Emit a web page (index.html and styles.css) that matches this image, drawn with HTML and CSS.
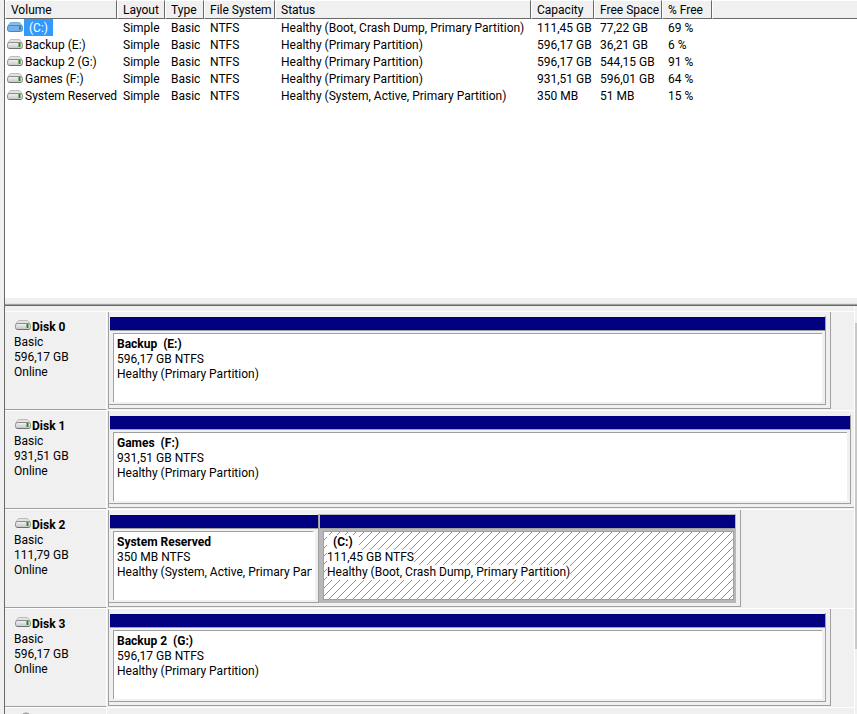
FILE: index.html
```html
<!DOCTYPE html>
<html lang="en">

<head>
    <meta charset="UTF-8">
    <meta name="viewport" content="width=device-width, initial-scale=1.0">
    <title>Disk Management</title>
    <link rel="stylesheet" href="styles.css">
</head>

<body>
    <!-- shared drive icon -->
    <svg class="defs" width="0" height="0" aria-hidden="true">
        <defs>
            <linearGradient id="metal" x1="0" y1="0" x2="0" y2="1">
                <stop offset="0" stop-color="#f4f4f4" />
                <stop offset="1" stop-color="#c4c4c8" />
            </linearGradient>
        </defs>
        <symbol id="drive" viewBox="0 0 16 11">
            <path d="M3.5 0.5h9L15 3.5H1z" fill="#e2e2e2" stroke="#bcbcbc" />
            <rect x="0.5" y="3.5" width="15" height="6" rx="2" fill="url(#metal)" stroke="#8c8c90" />
            <path d="M2 9.5h12" stroke="#707074" />
            <rect x="11" y="4" width="3" height="4" fill="#7fb878" />
            <rect x="12" y="4" width="1" height="4" fill="#2f7f2c" />
        </symbol>
        <symbol id="drive-selected" viewBox="0 0 16 11">
            <path d="M3.5 0.5h9L15 3.5H1z" fill="#86bbee" stroke="#7ab0e4" />
            <rect x="0.5" y="3.5" width="15" height="6" rx="2" fill="#76b0ea" stroke="#4a86c4" />
            <rect x="12" y="4" width="2" height="4" fill="#3a8a8f" />
        </symbol>
    </svg>

    <main class="console">
        <section class="volume-list">
            <table>
                <colgroup>
                    <col class="col-volume">
                    <col class="col-layout">
                    <col class="col-type">
                    <col class="col-fs">
                    <col class="col-status">
                    <col class="col-capacity">
                    <col class="col-space">
                    <col class="col-free">
                    <col>
                </colgroup>
                <thead>
                    <tr>
                        <th>Volume</th>
                        <th>Layout</th>
                        <th>Type</th>
                        <th>File System</th>
                        <th>Status</th>
                        <th>Capacity</th>
                        <th>Free Space</th>
                        <th>% Free</th>
                        <th></th>
                    </tr>
                </thead>
                <tbody>
                    <tr class="selected">
                        <td><div class="volume"><svg class="icon"><use href="#drive-selected" /></svg><span class="name">(C:)</span></div></td>
                        <td>Simple</td>
                        <td>Basic</td>
                        <td>NTFS</td>
                        <td>Healthy (Boot, Crash Dump, Primary Partition)</td>
                        <td>111,45 GB</td>
                        <td>77,22 GB</td>
                        <td>69 %</td>
                        <td></td>
                    </tr>
                    <tr>
                        <td><div class="volume"><svg class="icon"><use href="#drive" /></svg><span class="name">Backup (E:)</span></div></td>
                        <td>Simple</td>
                        <td>Basic</td>
                        <td>NTFS</td>
                        <td>Healthy (Primary Partition)</td>
                        <td>596,17 GB</td>
                        <td>36,21 GB</td>
                        <td>6 %</td>
                        <td></td>
                    </tr>
                    <tr>
                        <td><div class="volume"><svg class="icon"><use href="#drive" /></svg><span class="name">Backup 2 (G:)</span></div></td>
                        <td>Simple</td>
                        <td>Basic</td>
                        <td>NTFS</td>
                        <td>Healthy (Primary Partition)</td>
                        <td>596,17 GB</td>
                        <td>544,15 GB</td>
                        <td>91 %</td>
                        <td></td>
                    </tr>
                    <tr>
                        <td><div class="volume"><svg class="icon"><use href="#drive" /></svg><span class="name">Games (F:)</span></div></td>
                        <td>Simple</td>
                        <td>Basic</td>
                        <td>NTFS</td>
                        <td>Healthy (Primary Partition)</td>
                        <td>931,51 GB</td>
                        <td>596,01 GB</td>
                        <td>64 %</td>
                        <td></td>
                    </tr>
                    <tr>
                        <td><div class="volume"><svg class="icon"><use href="#drive" /></svg><span class="name">System Reserved</span></div></td>
                        <td>Simple</td>
                        <td>Basic</td>
                        <td>NTFS</td>
                        <td>Healthy (System, Active, Primary Partition)</td>
                        <td>350 MB</td>
                        <td>51 MB</td>
                        <td>15 %</td>
                        <td></td>
                    </tr>
                </tbody>
            </table>
        </section>

        <div class="splitter"></div>

        <section class="disk-view">
            <div class="disks">
                <div class="disk">
                    <div class="disk-label">
                        <h2><svg class="icon"><use href="#drive" /></svg>Disk 0</h2>
                        <p>Basic</p>
                        <p>596,17 GB</p>
                        <p>Online</p>
                    </div>
                    <div class="graph-area">
                        <div class="graph" style="width: 96.9%">
                            <div class="partition">
                                <div class="bar"></div>
                                <div class="info">
                                    <h3>Backup&nbsp; (E:)</h3>
                                    <p>596,17 GB NTFS</p>
                                    <p>Healthy (Primary Partition)</p>
                                </div>
                            </div>
                        </div>
                    </div>
                </div>

                <div class="disk">
                    <div class="disk-label">
                        <h2><svg class="icon"><use href="#drive" /></svg>Disk 1</h2>
                        <p>Basic</p>
                        <p>931,51 GB</p>
                        <p>Online</p>
                    </div>
                    <div class="graph-area">
                        <div class="graph full">
                            <div class="partition">
                                <div class="bar"></div>
                                <div class="info">
                                    <h3>Games&nbsp; (F:)</h3>
                                    <p>931,51 GB NTFS</p>
                                    <p>Healthy (Primary Partition)</p>
                                </div>
                            </div>
                        </div>
                    </div>
                </div>

                <div class="disk">
                    <div class="disk-label">
                        <h2><svg class="icon"><use href="#drive" /></svg>Disk 2</h2>
                        <p>Basic</p>
                        <p>111,79 GB</p>
                        <p>Online</p>
                    </div>
                    <div class="graph-area">
                        <div class="graph" style="width: 84.9%">
                            <div class="partition small">
                                <div class="bar"></div>
                                <div class="info">
                                    <h3>System Reserved</h3>
                                    <p>350 MB NTFS</p>
                                    <p>Healthy (System, Active, Primary Partition)</p>
                                </div>
                            </div>
                            <div class="partition active">
                                <div class="bar"></div>
                                <div class="info">
                                    <h3>(C:)</h3>
                                    <p>111,45 GB NTFS</p>
                                    <p>Healthy (Boot, Crash Dump, Primary Partition)</p>
                                </div>
                            </div>
                        </div>
                    </div>
                </div>

                <div class="disk">
                    <div class="disk-label">
                        <h2><svg class="icon"><use href="#drive" /></svg>Disk 3</h2>
                        <p>Basic</p>
                        <p>596,17 GB</p>
                        <p>Online</p>
                    </div>
                    <div class="graph-area">
                        <div class="graph" style="width: 96.9%">
                            <div class="partition">
                                <div class="bar"></div>
                                <div class="info">
                                    <h3>Backup 2&nbsp; (G:)</h3>
                                    <p>596,17 GB NTFS</p>
                                    <p>Healthy (Primary Partition)</p>
                                </div>
                            </div>
                        </div>
                    </div>
                </div>

                <div class="disk">
                    <div class="disk-label optical">
                        <svg class="disc" viewBox="0 0 16 16"><circle cx="12" cy="6" r="5" fill="#d8d8d8" stroke="#8a8a8a" /><circle cx="12" cy="6" r="2" fill="#f0f0f0" stroke="#8a8a8a" /></svg>
                    </div>
                    <div class="graph-area"></div>
                </div>
            </div>
            <div class="scrollbar"><div class="thumb"></div></div>
        </section>
    </main>
</body>

</html>
```
FILE: styles.css
```css
* {
    box-sizing: border-box;
}

body {
    background-color: #f0f0f0;
    color: #000;
    font-family: Roboto, "Open Sans", sans-serif;
    font-size: 12px;
    line-height: 15px;
    margin: 0;
    overflow: hidden;
}

h2,
h3,
p {
    font-size: 12px;
    margin: 0;
    white-space: pre;
}

.defs {
    display: block;
}

.console {
    border-left: 1px solid #696969;
    display: flex;
    flex-direction: column;
    height: 100vh;
    margin-left: 4px;
}

.icon {
    flex: none;
    height: 11px;
    width: 16px;
}

/* volume list */
.volume-list {
    background-color: #fff;
    flex: none;
    min-height: 298px;
}

table {
    border-collapse: separate;
    border-spacing: 0;
    table-layout: fixed;
    width: 100%;
}

.col-volume { width: 112px; }
.col-layout { width: 48px; }
.col-type { width: 39px; }
.col-fs { width: 71px; }
.col-status { width: 256px; }
.col-capacity { width: 63px; }
.col-space { width: 68px; }
.col-free { width: 50px; }

th {
    background-color: #f0f0f0;
    border-bottom: 1px solid #696969;
    border-left: 1px solid #fff;
    border-right: 1px solid #696969;
    border-top: 1px solid #fff;
    font-weight: normal;
    height: 19px;
    line-height: 15px;
    padding: 2px 0 0 5px;
    text-align: left;
    white-space: nowrap;
}

th:last-child {
    border-right: none;
}

td {
    height: 17px;
    padding: 2px 0 0 6px;
    white-space: nowrap;
}

td:first-child {
    padding: 0 0 0 2px;
}

.volume {
    align-items: center;
    display: flex;
}

.name {
    padding: 2px 0 0 2px;
}

.selected .name {
    background-color: #3399ff;
    color: #fff;
    margin-left: 1px;
    padding: 2px 5px 0;
}

.splitter {
    background-color: #f0f0f0;
    border-bottom: 1px solid #696969;
    box-shadow: inset 0 -1px #a0a0a0, inset 0 -2px #e3e3e3;
    flex: none;
    height: 8px;
}

/* graphical view */
.disk-view {
    display: flex;
    flex: 1;
    min-height: 0;
    overflow: hidden;
}

.disks {
    flex: 1;
    padding-top: 5px;
}

.disk {
    display: flex;
    height: 99px;
}

.disk-label {
    border-bottom: 1px solid #a0a0a0;
    border-right: 1px solid #fff;
    border-top: 1px solid #fff;
    flex: none;
    padding: 8px 0 0 9px;
    width: 102px;
}

.disk-label h2 {
    display: flex;
}

.disk-label h2 .icon {
    margin-left: 1px;
    margin-right: 1px;
}

.disk-label.optical {
    padding-top: 4px;
}

.disc {
    display: block;
    height: 16px;
    width: 16px;
}

.graph-area {
    border-left: 1px solid #f0f0f0;
    border-top: 1px solid #fff;
    flex: 1;
    min-width: 0;
}

.graph {
    border: solid #a0a0a0;
    border-width: 0 1px 1px;
    display: flex;
    height: 97px;
    padding: 4px 4px 3px 0;
}

.graph.full {
    border-right: none;
    padding-right: 3px;
}

.partition {
    border: solid #a0a0a0;
    border-width: 0 1px 1px 0;
    display: flex;
    flex: 1;
    flex-direction: column;
    min-width: 0;
    padding: 1px 0 2px 1px;
}

.partition.small {
    flex: 0 0 210px;
}

.bar {
    background-color: #000080;
    border-bottom: 1px solid #a0a0a0;
    height: 14px;
}

.info {
    background-color: #fff;
    border: solid #a0a0a0;
    border-width: 1px 0 0 1px;
    flex: 1;
    margin: 2px 3px 0 3px;
    overflow: hidden;
    padding: 3px 0 0 3px;
}

.partition.small .info {
    border-right: 3px solid #fff;
}

.partition.active {
    background-color: #b8b8b8;
    border-color: #b8b8b8;
}

.active .info {
    background-image: linear-gradient(135deg, transparent 46%, #909090 46%, #909090 54%, transparent 54%);
    background-size: 8px 8px;
    border-width: 1px;
    margin-right: 1px;
}

.active h3,
.active p {
    background-color: #fff;
    width: max-content;
}

.active h3 {
    padding: 0 6px;
}

/* right scrollbar */
.scrollbar {
    border-left: 1px solid #fff;
    flex: none;
    padding-top: 17px;
    width: 3px;
}

.thumb {
    background-color: #c8c8c8;
    height: 326px;
}
```
